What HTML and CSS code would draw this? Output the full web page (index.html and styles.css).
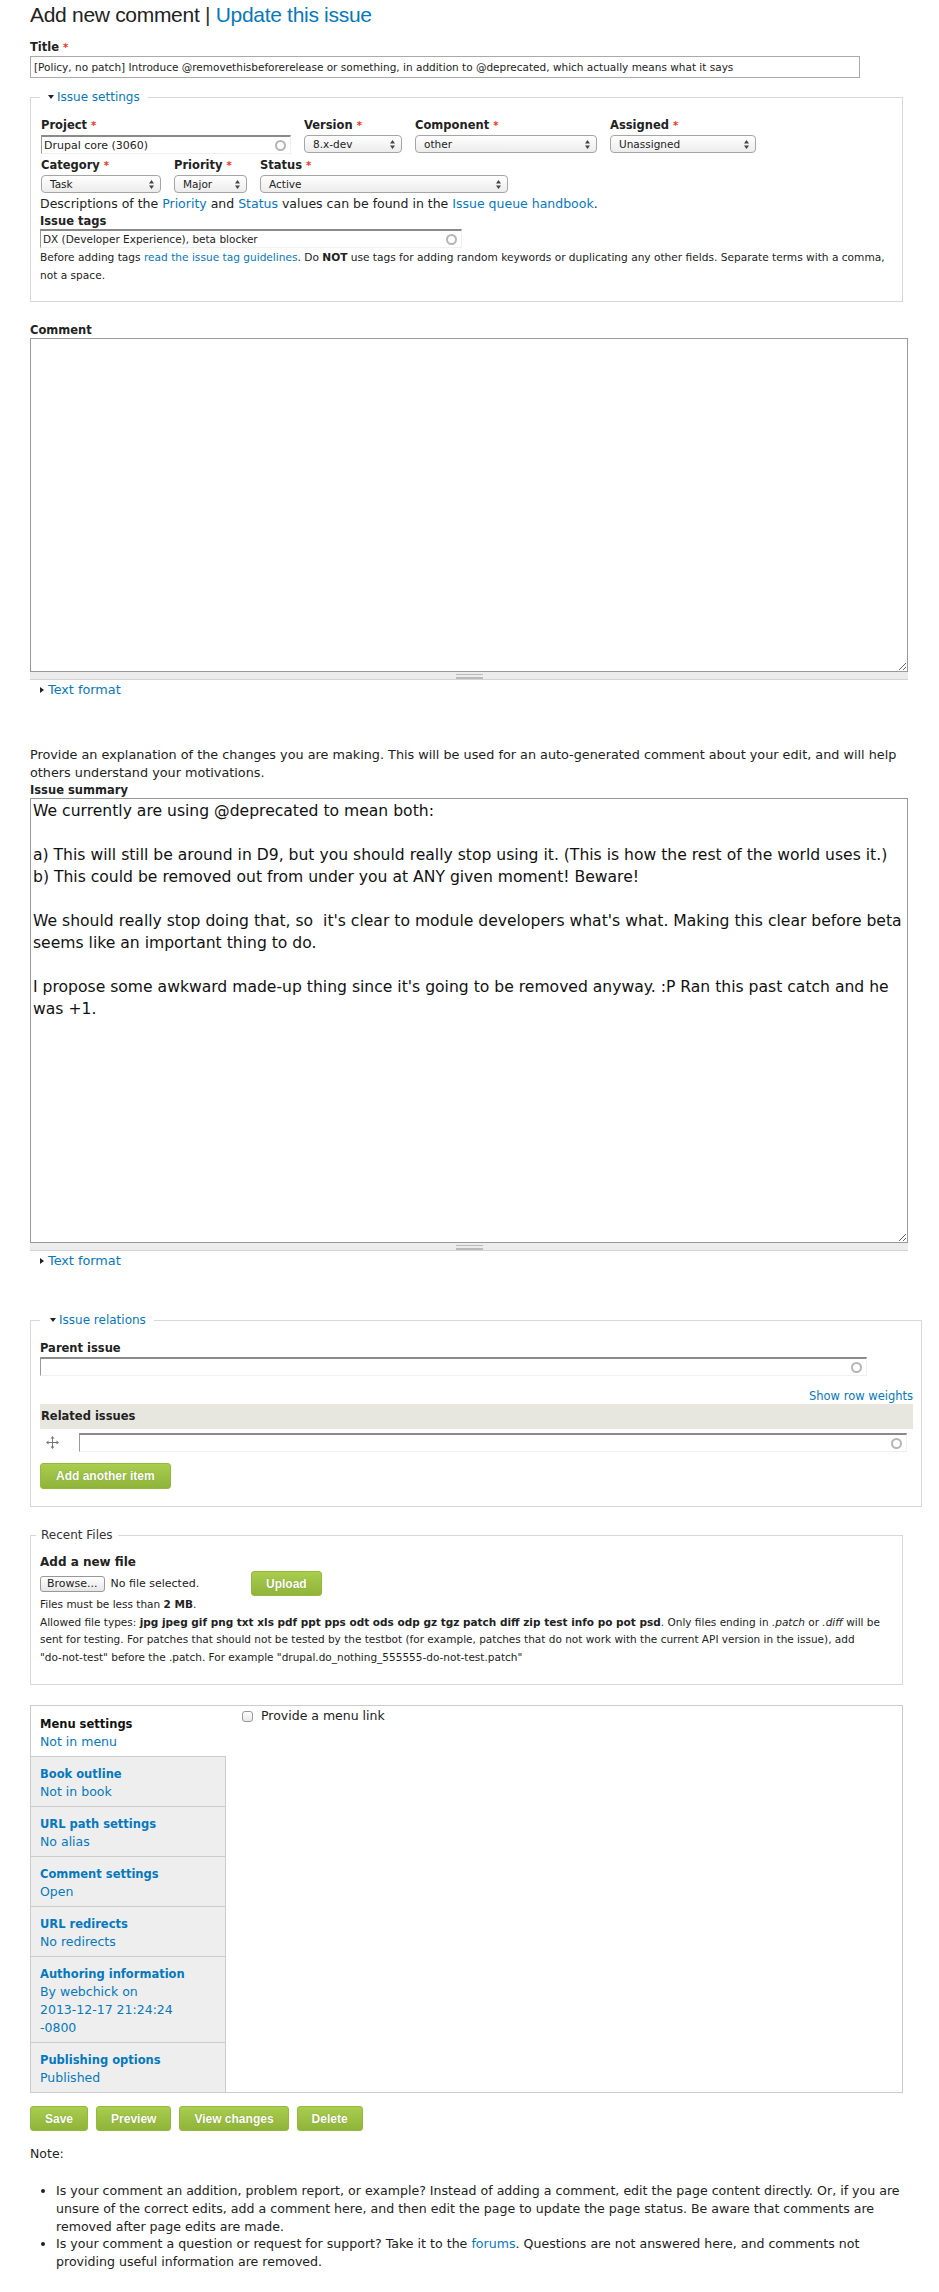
FILE: index.html
```html
<!DOCTYPE html>
<html lang="en">
<head>
    <meta charset="UTF-8">
    <title>Update this issue</title>
    <link rel="stylesheet" href="styles.css">
</head>
<body>
<div class="page">
    <h1 class="page-title">Add new comment <span class="sep">|</span> <a href="#">Update this issue</a></h1>

    <div class="form-item">
        <label class="lbl" for="edit-title">Title <span class="req">*</span></label>
        <input class="title-input" id="edit-title" type="text" value="[Policy, no patch] Introduce @removethisbeforerelease or something, in addition to @deprecated, which actually means what it says">
    </div>

    <fieldset class="box settings">
        <legend><span class="tri-down"></span><a href="#">Issue settings</a></legend>
        <div class="row">
            <div class="col w-project">
                <label class="lbl">Project <span class="req">*</span></label>
                <div class="ac-field"><input type="text" value="Drupal core (3060)"><span class="throbber"></span></div>
            </div>
            <div class="col w-version">
                <label class="lbl">Version <span class="req">*</span></label>
                <div class="select"><span>8.x-dev</span><svg width="5" height="9" viewBox="0 0 5 9"><path d="M2.5 0L5 3.5H0Z M2.5 9L0 5.5H5Z" fill="#444"/></svg></div>
            </div>
            <div class="col w-component">
                <label class="lbl">Component <span class="req">*</span></label>
                <div class="select"><span>other</span><svg width="5" height="9" viewBox="0 0 5 9"><path d="M2.5 0L5 3.5H0Z M2.5 9L0 5.5H5Z" fill="#444"/></svg></div>
            </div>
            <div class="col w-assigned">
                <label class="lbl">Assigned <span class="req">*</span></label>
                <div class="select"><span>Unassigned</span><svg width="5" height="9" viewBox="0 0 5 9"><path d="M2.5 0L5 3.5H0Z M2.5 9L0 5.5H5Z" fill="#444"/></svg></div>
            </div>
        </div>
        <div class="row row-2">
            <div class="col w-category">
                <label class="lbl">Category <span class="req">*</span></label>
                <div class="select"><span>Task</span><svg width="5" height="9" viewBox="0 0 5 9"><path d="M2.5 0L5 3.5H0Z M2.5 9L0 5.5H5Z" fill="#444"/></svg></div>
            </div>
            <div class="col w-priority">
                <label class="lbl">Priority <span class="req">*</span></label>
                <div class="select"><span>Major</span><svg width="5" height="9" viewBox="0 0 5 9"><path d="M2.5 0L5 3.5H0Z M2.5 9L0 5.5H5Z" fill="#444"/></svg></div>
            </div>
            <div class="col w-status">
                <label class="lbl">Status <span class="req">*</span></label>
                <div class="select"><span>Active</span><svg width="5" height="9" viewBox="0 0 5 9"><path d="M2.5 0L5 3.5H0Z M2.5 9L0 5.5H5Z" fill="#444"/></svg></div>
            </div>
        </div>
        <p class="descr">Descriptions of the <a href="#">Priority</a> and <a href="#">Status</a> values can be found in the <a href="#">Issue queue handbook</a>.</p>
        <label class="lbl">Issue tags</label>
        <div class="ac-field tags-field"><input type="text" value="DX (Developer Experience), beta blocker"><span class="throbber"></span></div>
        <p class="help">Before adding tags <a href="#">read the issue tag guidelines</a>. Do <b>NOT</b> use tags for adding random keywords or duplicating any other fields. Separate terms with a comma, not a space.</p>
    </fieldset>

    <label class="lbl">Comment</label>
    <textarea class="big-text comment-text"></textarea>
    <div class="grippie"><span></span></div>
    <div class="filter-toggle"><span class="tri-right"></span><a href="#">Text format</a></div>

    <p class="explain">Provide an explanation of the changes you are making. This will be used for an auto-generated comment about your edit, and will help others understand your motivations.</p>
    <label class="lbl">Issue summary</label>
    <textarea class="big-text summary-text">We currently are using @deprecated to mean both:

a) This will still be around in D9, but you should really stop using it. (This is how the rest of the world uses it.)
b) This could be removed out from under you at ANY given moment! Beware!

We should really stop doing that, so  it's clear to module developers what's what. Making this clear before beta seems like an important thing to do.

I propose some awkward made-up thing since it's going to be removed anyway. :P Ran this past catch and he was +1.</textarea>
    <div class="grippie"><span></span></div>
    <div class="filter-toggle"><span class="tri-right"></span><a href="#">Text format</a></div>

    <fieldset class="box relations">
        <legend><span class="tri-down"></span><a href="#">Issue relations</a></legend>
        <label class="lbl">Parent issue</label>
        <div class="ac-field parent-field"><input type="text" value=""><span class="throbber"></span></div>
        <div class="row-weights"><a href="#">Show row weights</a></div>
        <div class="table-head">Related issues</div>
        <div class="table-row">
            <span class="drag">
                <svg width="13" height="13" viewBox="0 0 13 13"><path d="M6.5 1.5v10M1.5 6.5h10" stroke="#777" stroke-width="1"/><path d="M6.5 0L4.5 2.5H8.5Z M6.5 13L4.5 10.5H8.5Z M0 6.5L2.5 4.5V8.5Z M13 6.5L10.5 4.5V8.5Z" fill="#777"/></svg>
            </span>
            <div class="ac-field related-field"><input type="text" value=""><span class="throbber"></span></div>
        </div>
        <button class="btn btn-add" type="button">Add another item</button>
    </fieldset>

    <fieldset class="box files">
        <legend>Recent Files</legend>
        <label class="lbl lbl-file">Add a new file</label>
        <div class="file-row">
            <div class="file-widget"><span class="browse">Browse...</span><span class="no-file">No file selected.</span></div>
            <button class="btn btn-upload" type="button">Upload</button>
        </div>
        <div class="file-descr">
            <p>Files must be less than <b>2 MB</b>.</p>
            <p>Allowed file types: <b>jpg jpeg gif png txt xls pdf ppt pps odt ods odp gz tgz patch diff zip test info po pot psd</b>. Only files ending in <i>.patch</i> or <i>.diff</i> will be sent for testing. For patches that should not be tested by the testbot (for example, patches that do not work with the current API version in the issue), add <span class="nowrap">"do-not-test"</span> before the .patch. For example "drupal.do_nothing_555555-do-not-test.patch"</p>
        </div>
    </fieldset>

    <div class="vtabs">
        <ul class="vtab-list">
            <li class="vtab selected"><strong>Menu settings</strong><span>Not in menu</span></li>
            <li class="vtab"><strong>Book outline</strong><span>Not in book</span></li>
            <li class="vtab"><strong>URL path settings</strong><span>No alias</span></li>
            <li class="vtab"><strong>Comment settings</strong><span>Open</span></li>
            <li class="vtab"><strong>URL redirects</strong><span>No redirects</span></li>
            <li class="vtab"><strong>Authoring information</strong><span>By webchick on <span class="nowrap">2013-12-17 21:24:24</span> <span class="nowrap">-0800</span></span></li>
            <li class="vtab"><strong>Publishing options</strong><span>Published</span></li>
        </ul>
        <div class="vtab-pane">
            <label class="check"><span class="checkbox"></span>Provide a menu link</label>
        </div>
    </div>

    <div class="actions">
        <button class="btn" type="button">Save</button>
        <button class="btn" type="button">Preview</button>
        <button class="btn" type="button">View changes</button>
        <button class="btn" type="button">Delete</button>
    </div>

    <p class="note">Note:</p>
    <ul class="note-list">
        <li>Is your comment an addition, problem report, or example? Instead of adding a comment, edit the page content directly. Or, if you are unsure of the correct edits, add a comment here, and then edit the page to update the page status. Be aware that comments are removed after page edits are made.</li>
        <li>Is your comment a question or request for support? Take it to the <a href="#">forums</a>. Questions are not answered here, and comments not providing useful information are removed.</li>
    </ul>
</div>
</body>
</html>
```

FILE: styles.css
```css
body {
    margin: 0;
    font-family: "DejaVu Sans", sans-serif;
    font-size: 12px;
    color: #222;
    background: #fff;
}

a {
    color: #0678be;
    text-decoration: none;
}

p {
    margin: 0;
}

.nowrap {
    white-space: nowrap;
}

.page {
    padding: 2px 0 40px 30px;
}

.page-title {
    margin: 0 0 11px;
    font: normal 21px/26px "Liberation Sans", Arial, sans-serif;
    letter-spacing: -0.3px;
    color: #222;
}

.page-title .sep {
    color: #333;
}

.lbl {
    display: block;
    font-weight: bold;
    font-size: 11.5px;
    line-height: 16px;
    color: #222;
}

.req {
    color: #e32;
    font-size: 10px;
}

.title-input {
    display: block;
    width: 830px;
    height: 22px;
    box-sizing: border-box;
    border: 1px solid #aaa;
    padding: 0 3px;
    font: 10.5px "DejaVu Sans", sans-serif;
    color: #222;
}

/* fieldsets */
.box {
    margin: 11px 0 20px;
    padding: 12px 9px 17px 9px;
    border: 1px solid #d8d8d8;
    min-width: 0;
}

.box legend {
    padding: 0 8px;
    font-size: 12px;
    line-height: 16px;
}

.settings {
    width: 873px;
    box-sizing: border-box;
}

.tri-down {
    display: inline-block;
    width: 0;
    height: 0;
    border-left: 3.5px solid transparent;
    border-right: 3.5px solid transparent;
    border-top: 4px solid #222;
    margin-right: 3px;
    vertical-align: 2px;
}

.tri-right {
    display: inline-block;
    width: 0;
    height: 0;
    border-top: 3.5px solid transparent;
    border-bottom: 3.5px solid transparent;
    border-left: 4px solid #222;
    margin-right: 4px;
    vertical-align: 1px;
}

.row {
    display: flex;
    gap: 13px;
    padding-left: 1px;
}

.row-2 {
    margin-top: 3px;
}

.col .lbl {
    margin-bottom: 1px;
}

.w-project { width: 250px; }
.w-version { width: 98px; }
.w-component { width: 182px; }
.w-assigned { width: 146px; }
.w-category { width: 120px; }
.w-priority { width: 73px; }
.w-status { width: 248px; }

.row-2 .select {
    margin-top: 1px;
}

.select {
    display: flex;
    align-items: center;
    justify-content: space-between;
    height: 18px;
    box-sizing: border-box;
    padding: 0 6px 0 8px;
    border: 1px solid #a5a5a5;
    border-radius: 4px;
    background: linear-gradient(#fff, #ececec);
    font-size: 10.5px;
    color: #222;
}

.ac-field {
    display: flex;
    align-items: center;
    height: 19px;
    box-sizing: border-box;
    border-top: 2px solid #8a8a8a;
    border-left: 1px solid #999;
    border-right: 1px solid #f0f0f0;
    border-bottom: 1px solid #f0f0f0;
    background: #fff;
}

.ac-field input {
    flex: 1;
    min-width: 0;
    border: 0;
    padding: 0 2px;
    background: transparent;
    font: 11px "DejaVu Sans", sans-serif;
    color: #222;
    outline: none;
}

.throbber {
    width: 7px;
    height: 7px;
    border: 2px solid #b5b5b5;
    border-radius: 50%;
    margin-right: 4px;
}

.descr {
    margin-top: 2px;
    font-size: 12.5px;
    line-height: 18px;
}

.tags-field {
    width: 422px;
}

.tags-field input {
    font-size: 10.5px;
}

.help {
    font-size: 10.6px;
    line-height: 18px;
}

/* textareas */
.big-text {
    display: block;
    width: 878px;
    box-sizing: border-box;
    margin: 0;
    border: 1px solid #999;
    border-bottom: 0;
    resize: vertical;
    font-family: "DejaVu Sans", sans-serif;
    color: #111;
}

.comment-text {
    height: 333px;
}

.summary-text {
    height: 444px;
    padding: 1px 2px;
    font-size: 15.6px;
    line-height: 22px;
}

.grippie {
    width: 878px;
    height: 9px;
    box-sizing: border-box;
    border-top: 1px solid #999;
    border-bottom: 1px solid #d4d4d4;
    background: #ececec;
    display: flex;
    justify-content: center;
    padding-top: 2px;
}

.grippie span {
    width: 27px;
    height: 5px;
    border-top: 1px solid #bbb;
    border-bottom: 1px solid #bbb;
    background: linear-gradient(transparent 2px, #bbb 2px, #bbb 3px, transparent 3px);
    box-sizing: border-box;
}

.filter-toggle {
    margin: 2px 0 0 10px;
    line-height: 16px;
    font-size: 12.8px;
}

.explain {
    margin-top: 48px;
    font-size: 12.8px;
    line-height: 18px;
    width: 880px;
}

/* issue relations */
.relations {
    width: 892px;
    box-sizing: border-box;
    margin-top: 43px;
    padding-right: 8px;
}

.relations legend {
    padding-left: 10px;
}

.parent-field {
    margin-top: 1px;
    width: 827px;
}

.row-weights {
    margin-top: 12px;
    text-align: right;
    line-height: 16px;
    font-size: 11.5px;
}

.table-head {
    background: #e8e7df;
    font-weight: bold;
    font-size: 11.5px;
    line-height: 25px;
    padding-left: 1px;
}

.table-row {
    display: flex;
    align-items: center;
    padding: 4px 0;
}

.drag {
    width: 39px;
    padding-left: 6px;
    box-sizing: border-box;
    display: flex;
}

.related-field {
    width: 828px;
}

.btn {
    height: 25px;
    padding: 0 14px;
    border: 1px solid #95b93d;
    border-radius: 3px;
    background: linear-gradient(#a9cd4e, #9cc043 50%, #90b43a);
    color: #fff;
    font: bold 12px "Liberation Sans", Arial, sans-serif;
    text-shadow: 0 0 1px rgba(80, 110, 20, 0.5);
    cursor: pointer;
}

.btn-add {
    display: block;
    height: 26px;
    margin-top: 7px;
    padding: 0 15px;
}

/* files */
.files {
    width: 873px;
    box-sizing: border-box;
    margin-top: 19px;
    padding-top: 11px;
    padding-bottom: 18px;
}

.files legend {
    margin-left: -4px;
    padding: 0 5px;
    color: #333;
}

.lbl-file {
    font-size: 12px;
}

.file-row {
    display: flex;
    align-items: center;
    height: 25px;
    margin-top: 1px;
}

.file-widget {
    width: 211px;
    display: flex;
    align-items: center;
}

.browse {
    height: 16px;
    box-sizing: border-box;
    padding: 0 6px;
    border: 1px solid #999;
    border-radius: 3px;
    background: linear-gradient(#fff, #e6e6e6);
    font-size: 11px;
    line-height: 14px;
}

.no-file {
    margin-left: 6px;
    font-size: 11px;
}

.btn-upload {
    height: 25px;
}

.file-descr {
    font-size: 10.5px;
    line-height: 17.5px;
}

/* vertical tabs */
.vtabs {
    display: flex;
    width: 873px;
    box-sizing: border-box;
    margin-top: 17px;
    border: 1px solid #ccc;
}

.vtab-list {
    list-style: none;
    margin: 0;
    padding: 0;
    width: 195px;
    flex: none;
}

.vtab {
    padding: 8px 26px 5px 9px;
    border-top: 1px solid #ccc;
    border-right: 1px solid #ccc;
    background: #eee;
    line-height: 18px;
    font-size: 12.5px;
    color: #0678be;
}

.vtab strong,
.vtab > span {
    display: block;
}

.vtab strong {
    font-size: 11.5px;
    white-space: nowrap;
}

.vtab.selected {
    padding-top: 9px;
    border-top: 0;
    border-right-color: #fff;
    background: #fff;
}

.vtab.selected strong {
    color: #111;
}

.vtab-pane {
    flex: 1;
    padding: 2px 0 0 16px;
}

.check {
    display: flex;
    align-items: center;
    line-height: 16px;
    font-size: 12.5px;
}

.checkbox {
    width: 11px;
    height: 11px;
    box-sizing: border-box;
    border: 1px solid #999;
    border-radius: 3px;
    background: linear-gradient(#fff, #e8e8e8);
    margin-right: 8px;
}

/* actions */
.actions {
    display: flex;
    gap: 8px;
    margin-top: 13px;
}

.note {
    margin-top: 14px;
    line-height: 18px;
    font-size: 12.5px;
}

.note-list {
    margin: 19px 0 0;
    padding-left: 26px;
    width: 854px;
    font-size: 12.6px;
    line-height: 17.8px;
}
```
